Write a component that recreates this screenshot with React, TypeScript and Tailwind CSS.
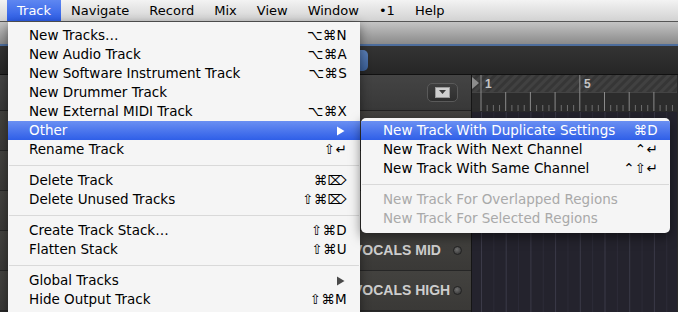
import React from "react";

type Item =
  | { kind: "item"; label: string; sc?: string; sub?: boolean; hi?: boolean; dis?: boolean }
  | { kind: "sep" };

const mainItems: Item[] = [
  { kind: "item", label: "New Tracks…", sc: "⌥⌘N" },
  { kind: "item", label: "New Audio Track", sc: "⌥⌘A" },
  { kind: "item", label: "New Software Instrument Track", sc: "⌥⌘S" },
  { kind: "item", label: "New Drummer Track" },
  { kind: "item", label: "New External MIDI Track", sc: "⌥⌘X" },
  { kind: "item", label: "Other", sub: true, hi: true },
  { kind: "item", label: "Rename Track", sc: "⇧↵" },
  { kind: "sep" },
  { kind: "item", label: "Delete Track", sc: "⌘⌦" },
  { kind: "item", label: "Delete Unused Tracks", sc: "⇧⌘⌦" },
  { kind: "sep" },
  { kind: "item", label: "Create Track Stack…", sc: "⇧⌘D" },
  { kind: "item", label: "Flatten Stack", sc: "⇧⌘U" },
  { kind: "sep" },
  { kind: "item", label: "Global Tracks", sub: true },
  { kind: "item", label: "Hide Output Track", sc: "⇧⌘M" },
];

const subItems: Item[] = [
  { kind: "item", label: "New Track With Duplicate Settings", sc: "⌘D", hi: true },
  { kind: "item", label: "New Track With Next Channel", sc: "⌃↵" },
  { kind: "item", label: "New Track With Same Channel", sc: "⌃⇧↵" },
  { kind: "sep" },
  { kind: "item", label: "New Track For Overlapped Regions", dis: true },
  { kind: "item", label: "New Track For Selected Regions", dis: true },
];

function Arrow({ white }: { white?: boolean }) {
  return (
    <svg width="9" height="10" viewBox="0 0 9 10" className="block">
      <path d="M1 0.5 L8.5 5 L1 9.5 Z" fill={white ? "#ffffff" : "#4a4a4a"} />
    </svg>
  );
}

function MenuList({ items, pl, pr }: { items: Item[]; pl: string; pr: string }) {
  return (
    <div className="flex flex-col">
      {items.map((it, i) =>
        it.kind === "sep" ? (
          <div key={i} className="h-[12px] pt-[6px]">
            <div className="h-px bg-[#d9d9d9] mx-px" />
          </div>
        ) : (
          <div
            key={i}
            className={
              "h-[19px] flex items-center justify-between " +
              pl +
              " " +
              pr +
              " " +
              (it.hi
                ? "bg-[linear-gradient(#6a8ff2,#2f5fe8)] text-white"
                : it.dis
                ? "text-[#a9a9a9]"
                : "text-black")
            }
          >
            <span className="whitespace-nowrap">{it.label}</span>
            {it.sc ? (
              <span className="whitespace-nowrap text-[13.5px] font-['DejaVu_Sans',sans-serif] tracking-[0.3px]">{it.sc}</span>
            ) : it.sub ? (
              <span className="mr-[2px]">
                <Arrow white={it.hi} />
              </span>
            ) : null}
          </div>
        )
      )}
    </div>
  );
}

function Ruler() {
  const ticks: React.ReactNode[] = [];
  for (let k = 0; k < 9; k++) {
    const x = 9 + k * 24.7;
    ticks.push(<line key={"b" + k} x1={x} y1={k === 0 || k === 4 ? 0 : 17} x2={x} y2={36} stroke="#8a8a8a" strokeWidth="1" />);
    for (let q = 1; q < 4; q++) {
      const xx = x + q * 6.18;
      ticks.push(<line key={"q" + k + q} x1={xx} y1={30} x2={xx} y2={36} stroke="#6e6e6e" strokeWidth="1" />);
    }
  }
  return (
    <svg width="205" height="36" viewBox="0 0 205 36" className="block">
      <defs>
        <pattern id="hatch" width="6" height="6" patternUnits="userSpaceOnUse" patternTransform="rotate(45)">
          <rect width="6" height="6" fill="#363636" />
          <rect width="3" height="6" fill="#414141" />
        </pattern>
      </defs>
      <rect x="0" y="0" width="205" height="17" fill="url(#hatch)" />
      <rect x="0" y="17" width="205" height="19" fill="#2c2c2c" />
      <line x1="0" y1="17.5" x2="205" y2="17.5" stroke="#444" />
      {ticks}
      <path d="M0 2 L7 8 L0 14 Z" fill="#8c8c8c" />
      <text x="13" y="13" fill="#c4c4c4" fontSize="12" fontWeight="bold" fontFamily="Liberation Sans, sans-serif">1</text>
      <text x="112" y="13" fill="#c4c4c4" fontSize="12" fontWeight="bold" fontFamily="Liberation Sans, sans-serif">5</text>
    </svg>
  );
}

function Grid() {
  const lines: React.ReactNode[] = [];
  for (let k = 0; k < 9; k++) {
    const x = 9.5 + k * 24.7;
    lines.push(<line key={"b" + k} x1={x} y1={0} x2={x} y2={200} stroke="#3b3a48" strokeWidth="1" />);
    lines.push(<line key={"c" + k} x1={x + 12.35} y1={0} x2={x + 12.35} y2={200} stroke="#2d2c38" strokeWidth="1" />);
  }
  return (
    <svg width="205" height="200" viewBox="0 0 205 200" className="block">
      <rect width="205" height="200" fill="#24232d" />
      {lines}
    </svg>
  );
}

function TrackRow({ name }: { name?: string }) {
  return (
    <div className="h-[40px] flex items-center border-b border-[#262626] bg-[linear-gradient(#43423f,#3a3937)]">
      <div className="ml-[353px] flex-1 flex items-center justify-between pr-[9px]">
        <span className="text-[#cdcdcd] text-[14px] font-bold font-['Liberation_Sans',sans-serif]">{name}</span>
        {name ? (
          <span className="w-[9px] h-[9px] rounded-full bg-[radial-gradient(circle_at_40%_35%,#707070,#2a2a2a)] border border-[#222]" />
        ) : null}
      </div>
    </div>
  );
}

export default function App() {
  const menuFont = "font-['Lucida_Grande','DejaVu_Sans',sans-serif]";
  return (
    <div className={"relative w-[678px] h-[312px] overflow-hidden bg-[#2a2a2a] text-[13.5px] " + menuFont}>
      {/* menu bar */}
      <div className="h-[22px] flex items-stretch pl-[7px] bg-[linear-gradient(#f3f3f3,#d2d2d2)] border-b border-[#555] text-[13px] text-black">
        <div className="px-[10px] flex items-center bg-[linear-gradient(#5f87f1,#2b5ce6)] text-white">Track</div>
        {["Navigate", "Record", "Mix", "View", "Window", "•1", "Help"].map((m) => (
          <div key={m} className="px-[10px] flex items-center">
            {m}
          </div>
        ))}
      </div>

      {/* app body */}
      <div className="flex flex-col">
        <div className="h-[22px] bg-[linear-gradient(#c4c4c4,#8a8a8a)]" />
        <div className="h-[2px] bg-[#4d6d9c]" />
        <div className="h-[29px] bg-[linear-gradient(#343434,#262626)] flex items-center border-b border-[#111]">
          <div className="ml-[330px] w-[38px] h-[21px] rounded-[5px] bg-[linear-gradient(#5a7fb8,#3a5e96)]" />
        </div>
        <div className="flex">
          <div className="w-[472px] border-r border-[#151515] flex flex-col">
            <div className="h-[36px] bg-[linear-gradient(#444,#383838)] flex items-center border-b border-[#222]">
              <div className="ml-[427px] w-[31px] h-[19px] rounded-[5px] border border-[#5a5a5a] bg-[linear-gradient(#3e3e3e,#2e2e2e)] flex items-center justify-center">
                <svg width="15" height="11" viewBox="0 0 15 11">
                  <rect x="0.5" y="0.5" width="14" height="10" fill="#cfcfcf" stroke="#9a9a9a" />
                  <path d="M4 3 L11 3 L7.5 7 Z" fill="#3a3a3a" />
                </svg>
              </div>
            </div>
            <TrackRow />
            <TrackRow />
            <TrackRow />
            <TrackRow name="VOCALS MID" />
            <TrackRow name="VOCALS HIGH" />
          </div>
          <div className="flex-1 flex flex-col">
            <div className="h-[37px]">
              <Ruler />
            </div>
            <Grid />
          </div>
        </div>
      </div>

      {/* main dropdown */}
      <div className="absolute left-[8px] top-[22px] w-[352px] h-[300px] pt-[4px] bg-[#f5f5f5] shadow-[0_3px_10px_rgba(0,0,0,0.45)]">
        <MenuList items={mainItems} pl="pl-[21px]" pr="pr-[13px]" />
      </div>

      {/* submenu */}
      <div className="absolute left-[361px] top-[118px] w-[309px] pt-[3px] pb-[5px] bg-[#f5f5f5] rounded-[5px] overflow-hidden shadow-[0_4px_12px_rgba(0,0,0,0.5)]">
        <MenuList items={subItems} pl="pl-[22px]" pr="pr-[12px]" />
      </div>
    </div>
  );
}
